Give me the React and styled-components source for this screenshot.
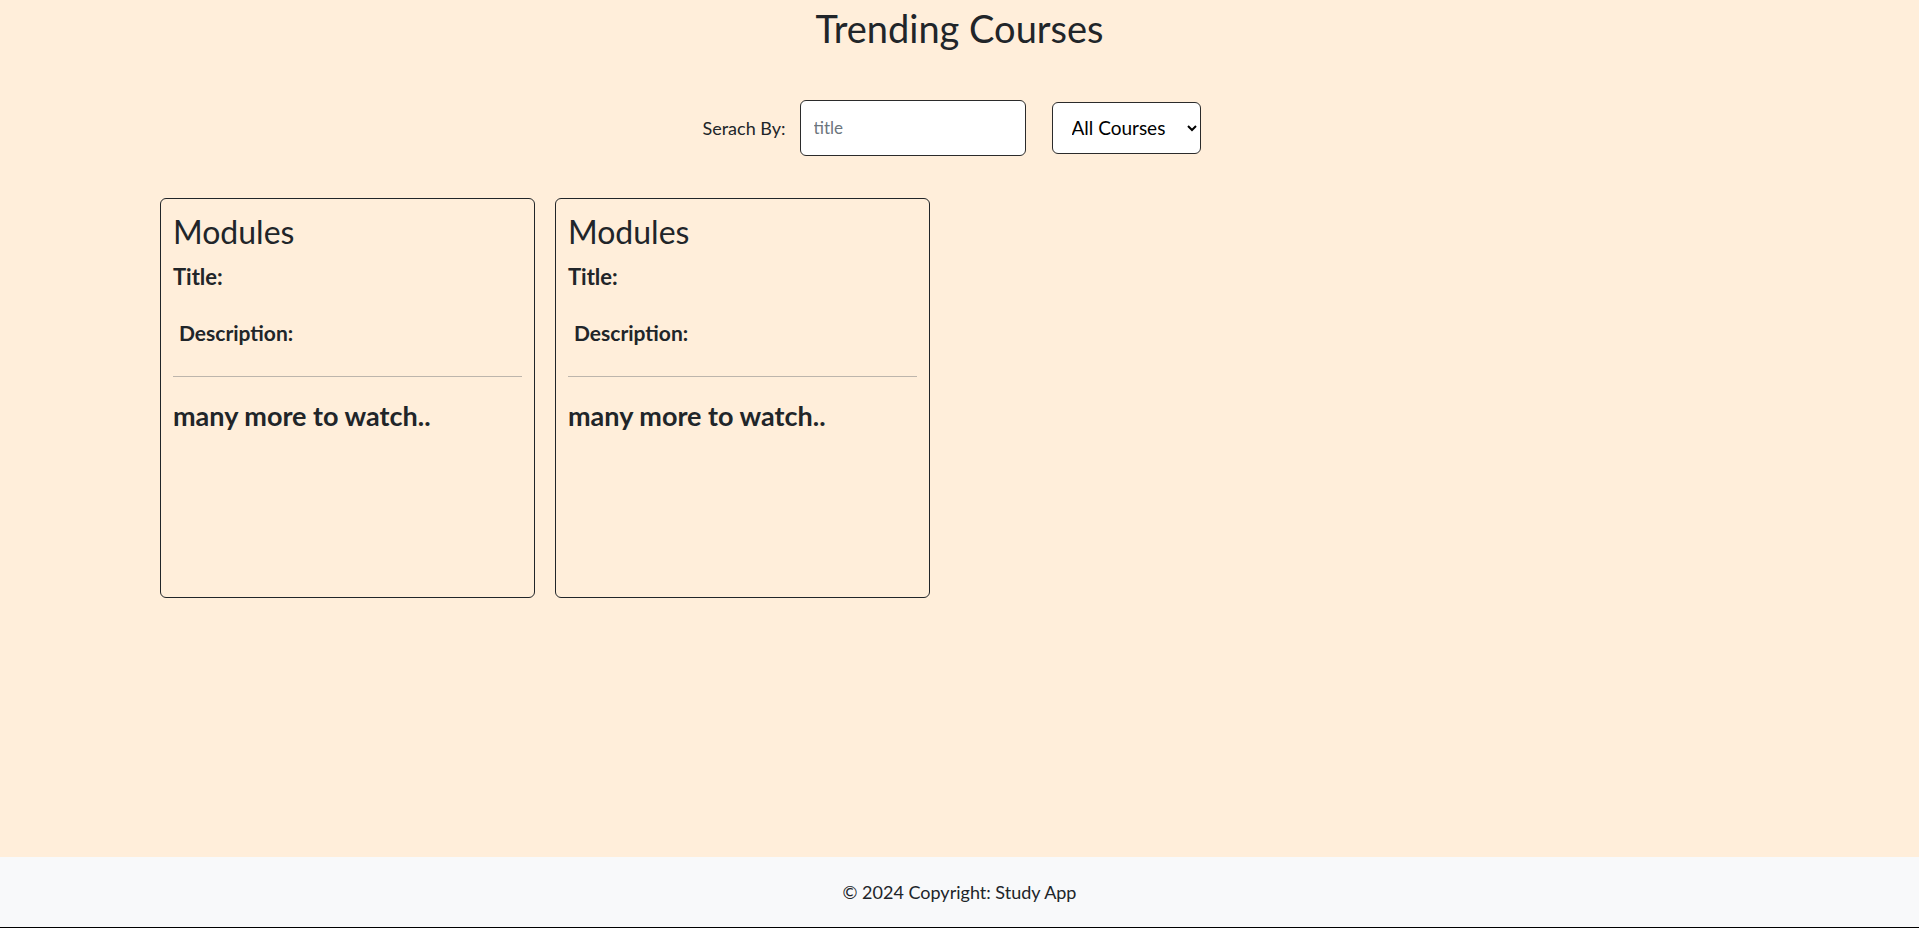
import { useState } from "react";
import styled, { createGlobalStyle } from "styled-components";

const courses = [
  { id: 1, title: '', description: '' },
  { id: 2, title: '', description: '' },
];

export default function App (){
  const [search, setSearch] = useState('');
  const [category, setCategory] = useState('all');

  return(
    <>
      <GlobalStyle />
      <Page>
        <Main>
          <Heading>Trending Courses</Heading>
          <SearchRow>
            <SearchLabel>Serach By:</SearchLabel>
            <SearchInput
              placeholder='title'
              type='text'
              value={search}
              onChange={(e) => setSearch(e.target.value)}
            />
            <CategorySelect value={category} onChange={(e) => setCategory(e.target.value)}>
              <option value={'all'}>All Courses</option>
              <option value={'mine'}>My Courses</option>
            </CategorySelect>
          </SearchRow>
          <CardGrid>
            {courses.map((c) => (
              <ModuleCard key={c.id}>
                <CardTitle>Modules</CardTitle>
                <FieldLabel>Title:{c.title}</FieldLabel>
                <FieldLabel $indent>Description:{c.description}</FieldLabel>
                <Divider />
                <MoreText>many more to watch..</MoreText>
              </ModuleCard>
            ))}
          </CardGrid>
        </Main>
        <Footer>© 2024 Copyright: Study App</Footer>
      </Page>
    </>
  )
}

const GlobalStyle = createGlobalStyle`
  *{
    box-sizing: border-box;
  }
  body{
    margin: 0;
    background-color: #FFEEDA;
    color: #212529;
    font-family: Lato, "Open Sans", sans-serif;
  }
`

const Page = styled.div`
  min-height: 928px;
  display: flex;
  flex-direction: column;
`

const Main = styled.main`
  flex: 1;
  display: flex;
  flex-direction: column;
`

const Heading = styled.h1`
  margin: 6px 0 0;
  text-align: center;
  font-size: 38px;
  font-weight: 400;
  line-height: 1.2;
`

const SearchRow = styled.div`
  display: flex;
  align-items: center;
  justify-content: center;
  margin-top: 48px;
  padding-right: 16px;
`

const SearchLabel = styled.label`
  font-size: 18px;
  margin-right: 14px;
`

const SearchInput = styled.input`
  width: 226px;
  height: 56px;
  padding: 0 13px;
  font-family: inherit;
  font-size: 17px;
  color: #212529;
  background-color: #FFFFFF;
  border: 1px solid #2B2B2B;
  border-radius: 6px;

  &:focus{
    outline: none;
  }

  &::placeholder{
    color: #6C757D;
  }
`

const CategorySelect = styled.select`
  margin-left: 26px;
  width: 149px;
  height: 52px;
  padding: 0 6px 0 15px;
  font-family: inherit;
  font-size: 19px;
  color: #000000;
  background-color: #FFFFFF;
  border: 1px solid #2B2B2B;
  border-radius: 6px;
`

const CardGrid = styled.div`
  display: flex;
  gap: 20px;
  margin-top: 42px;
  padding-left: 160px;
`

const ModuleCard = styled.div`
  width: 375px;
  height: 400px;
  padding: 14px 12px;
  border: 1px solid #212529;
  border-radius: 6px;
`

const CardTitle = styled.h2`
  margin: 0 0 13px;
  font-size: 32px;
  font-weight: 400;
  line-height: 1.2;
`

const FieldLabel = styled.p`
  margin: 0 0 30px;
  padding-left: ${(p) => (p.$indent ? '6px' : '0')};
  font-size: ${(p) => (p.$indent ? '21px' : '22px')};
  font-weight: 700;
  line-height: 1.2;
`

const Divider = styled.hr`
  margin: 0 0 23px;
  border: 0;
  border-top: 1px solid #BDB5AC;
`

const MoreText = styled.h4`
  margin: 0;
  font-size: 27px;
  font-weight: 700;
  line-height: 1.2;
`

const Footer = styled.footer`
  height: 71px;
  display: flex;
  align-items: center;
  justify-content: center;
  background-color: #F8F9FA;
  border-bottom: 1px solid #000000;
  font-size: 18px;
`
